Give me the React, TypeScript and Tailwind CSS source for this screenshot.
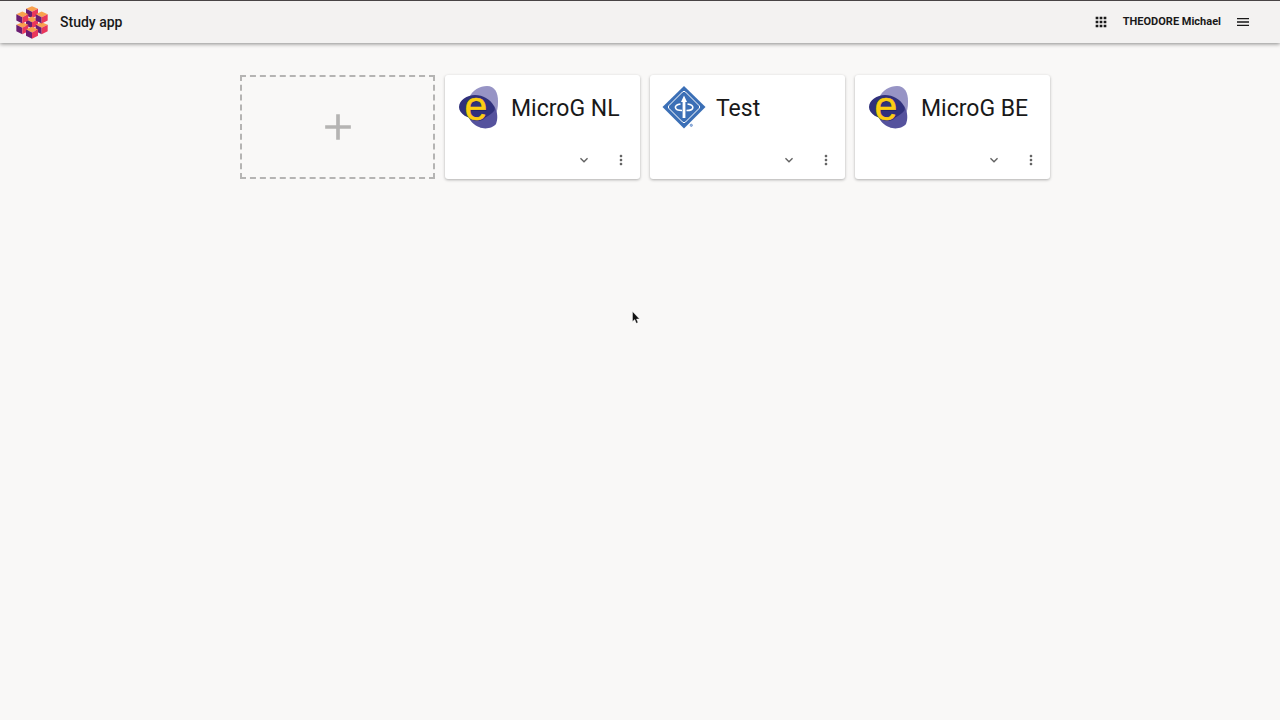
import { MdAdd, MdApps, MdExpandMore, MdMenu, MdMoreVert } from "react-icons/md";

type LogoKind = "browser" | "institute";

const apps: { name: string; logo: LogoKind }[] = [
  { name: "MicroG NL", logo: "browser" },
  { name: "Test", logo: "institute" },
  { name: "MicroG BE", logo: "browser" },
];

const cubes = [
  [65, 28],
  [65, 59],
  [36, 76],
  [94, 76],
  [36, 44],
  [94, 44],
  [65, 90],
];

function CubesLogo() {
  return (
    <svg viewBox="17 10 96 98" className="h-[33px] w-8" aria-hidden="true">
      {cubes.map(([x, y]) => (
        <g key={`${x}-${y}`} transform={`translate(${x} ${y})`}>
          <path d="M0-18 18-10 0-1-18-10Z" fill="#f9a14d" />
          <path d="M-18-10 0-1V18L-18 9Z" fill="#6b1d72" />
          <path d="M18-10 0-1V18L18 9Z" fill="#e9375b" />
        </g>
      ))}
    </svg>
  );
}

function BrowserLogo() {
  return (
    <svg viewBox="0 0 44 44" className="size-11 overflow-visible" aria-hidden="true">
      <path d="M12 13C15 5 23 1 30 1c8 0 11 7 11 15 0 7-1 11-3 14-6 4-23-4-26-17Z" fill="#9794c5" />
      <path d="M11 31C18 25 27 21 37 21c4 6 4 13 2 18-3 4-11 6-17 3-5-2-9-6-11-11Z" fill="#55529d" />
      <path d="M2 22C2 15 10 10 18 10c8 0 15 4 19 11 1 2 1 4 0 5-4 5-11 8-17 8C11 34 2 29 2 22Z" fill="#30317c" />
      <text x="8.500" y="35.500" fontFamily="Liberation Sans, sans-serif" fontSize="41" fill="#171b50" opacity="0.5">e</text>
      <text x="7.500" y="34.500" fontFamily="Liberation Sans, sans-serif" fontSize="41" fill="#fbcd12" stroke="#fbcd12" strokeWidth="0.5">e</text>
    </svg>
  );
}

function InstituteLogo() {
  return (
    <svg viewBox="0 0 44 44" className="size-11" aria-hidden="true">
      <path d="M22 1 43.5 22 22 43.5 0.5 22Z" fill="#3b6fb6" />
      <path d="M20.5 7Q22 5.500 23.500 7L37 20.500Q38.500 22 37 23.500L23.500 37Q22 38.500 20.500 37L7 23.500Q5.500 22 7 20.500Z" fill="none" stroke="#fff" strokeWidth="1" />
      <path d="M22 10.500 25 17H23.400V33H20.600V17H19Z" fill="#fff" />
      <path d="M18.500 19C11 20 12 25.500 20 25.500M24.500 25.500C33 25.500 32.500 20 25.500 19" fill="none" stroke="#fff" strokeWidth="1.600" />
      <circle cx="29.300" cy="40.300" r="1.100" fill="#a9c1e5" stroke="#668fca" strokeWidth="0.900" />
    </svg>
  );
}

function AppCard({ name, logo }: { name: string; logo: LogoKind }) {
  return (
    <article className="flex h-[104px] flex-col justify-between rounded-[3px] bg-white shadow-[0_1px_3px_rgba(0,0,0,0.3)]">
      <div className="flex items-end gap-[10px] px-3 pt-[10px]">
        {logo === "browser" ? <BrowserLogo /> : <InstituteLogo />}
        <h2 className="whitespace-nowrap text-[23px] leading-10 text-[#191919]">{name}</h2>
      </div>
      <div className="flex justify-end gap-[5px] px-[3px] pb-[3px] text-[#626262]">
        <button type="button" aria-label={`Expand ${name}`} className="flex size-8 items-center justify-center rounded-full">
          <MdExpandMore size={16} />
        </button>
        <button type="button" aria-label={`Options for ${name}`} className="flex size-8 items-center justify-center rounded-full">
          <MdMoreVert size={16} />
        </button>
      </div>
    </article>
  );
}

export default function App() {
  return (
    <div className="min-h-screen bg-[#f9f8f7] font-['Roboto',sans-serif] text-[#191919]">
      <header className="flex h-[43px] items-center justify-between border-t border-[#484446] bg-[#f3f2f1] pl-4 pr-[29px] shadow-[0_1px_4px_rgba(0,0,0,0.45)]">
        <div className="flex items-center gap-3">
          <CubesLogo />
          <h1 className="text-sm font-medium leading-5">Study app</h1>
        </div>
        <div className="flex items-center gap-[14px]">
          <button type="button" aria-label="Applications">
            <MdApps size={16} />
          </button>
          <span className="text-[11px] font-bold leading-4">THEODORE Michael</span>
          <button type="button" aria-label="Menu">
            <MdMenu size={16} />
          </button>
        </div>
      </header>
      <main className="mx-auto grid max-w-[810px] grid-cols-[repeat(auto-fill,minmax(190px,1fr))] gap-[10px] pt-8 xl:ml-[18.75%]">
        <button
          type="button"
          aria-label="Add application"
          className="flex h-[104px] items-center justify-center border-2 border-dashed border-[#b5b4b3] text-[#b5b4b3]"
        >
          <MdAdd size={44} />
        </button>
        {apps.map((app) => (
          <AppCard key={app.name} {...app} />
        ))}
      </main>
      <svg viewBox="0 0 8 13" className="pointer-events-none absolute left-[632px] top-[311px] h-[13px] w-2" aria-hidden="true">
        <path d="M.5.5V10.500L2.800 8.500 4.300 12.300 6 11.500 4.500 8H7.500Z" fill="#111" stroke="#fff" strokeWidth="0.400" />
      </svg>
    </div>
  );
}
